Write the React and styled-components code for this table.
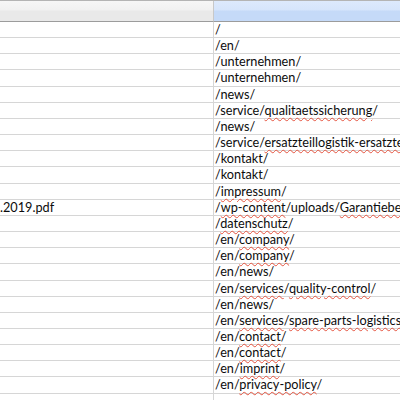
import React from 'react';
import styled, { createGlobalStyle } from 'styled-components';

const GlobalStyle = createGlobalStyle`
  html, body {
    margin: 0;
    padding: 0;
    background: #ffffff;
  }
  body {
    font-family: 'Lato', 'Liberation Sans', sans-serif;
  }
`;

const ROW_H = 16.17;

const Sheet = styled.div`
  width: 400px;
  height: 400px;
  overflow: hidden;
  display: grid;
  grid-template-columns: 213px 1fr;
  grid-auto-rows: ${ROW_H}px;
  grid-template-rows: 21px;
  border-top: 1px solid #b4b4b4;
  box-sizing: border-box;
`;

const HeaderCell = styled.div`
  height: 21px;
  box-sizing: border-box;
  border-bottom: 1px solid #9c9c9c;
  border-left: ${(p) => (p.$first ? 'none' : '1px solid #c8c8c8')};
  background: ${(p) =>
    p.$selected
      ? 'linear-gradient(#dde9fc 0%, #d6e5fb 45%, #c5daf8 50%, #c5daf8 100%)'
      : 'linear-gradient(#f6f6f6 0%, #f1f1f1 45%, #e9e9e9 50%, #e9e9e9 100%)'};
`;

const Cell = styled.div`
  box-sizing: border-box;
  border-bottom: 1px solid #d6d6d6;
  border-left: ${(p) => (p.$first ? 'none' : '1px solid #d6d6d6')};
  padding-left: ${(p) => (p.$first ? '0' : '1px')};
  font-size: 12.7px;
  line-height: ${ROW_H - 1}px;
  color: #0c0c0c;
  white-space: nowrap;
  overflow: visible;
`;

const Typo = styled.span`
  text-decoration: underline wavy #e5533f;
  text-decoration-thickness: 1px;
  text-underline-offset: 2px;
`;

// each row: segments, strings in [] are spell-checker flagged
const rows = [
  ['/'],
  ['/en/'],
  ['/unternehmen/'],
  ['/unternehmen/'],
  ['/news/'],
  ['/service/', ['qualitaetssicherung'], '/'],
  ['/news/'],
  ['/service/', ['ersatzteillogistik-ersatzteilversorgung'], '/'],
  ['/kontakt/'],
  ['/kontakt/'],
  ['/', ['impressum'], '/'],
  ['/', ['wp-content'], '/uploads/', ['Garantiebedingungen'], '.2019.pdf'],
  ['/', ['datenschutz'], '/'],
  ['/en/', ['company'], '/'],
  ['/en/', ['company'], '/'],
  ['/en/news/'],
  ['/en/', ['services'], '/', ['quality-control'], '/'],
  ['/en/news/'],
  ['/en/', ['services'], '/', ['spare-parts-logistics'], '/'],
  ['/en/', ['contact'], '/'],
  ['/en/', ['contact'], '/'],
  ['/en/', ['imprint'], '/'],
  ['/en/', ['privacy-policy'], '/'],
  [],
];

const leftText = { 11: '.2019.pdf' };

export default function App() {
  return (
    <>
      <GlobalStyle />
      <Sheet>
        <HeaderCell $first />
        <HeaderCell $selected />
        {rows.map((segs, i) => (
          <React.Fragment key={i}>
            <Cell $first>{leftText[i] || ''}</Cell>
            <Cell>
              {segs.map((s, j) =>
                Array.isArray(s) ? <Typo key={j}>{s[0]}</Typo> : <span key={j}>{s}</span>
              )}
            </Cell>
          </React.Fragment>
        ))}
      </Sheet>
    </>
  );
}
